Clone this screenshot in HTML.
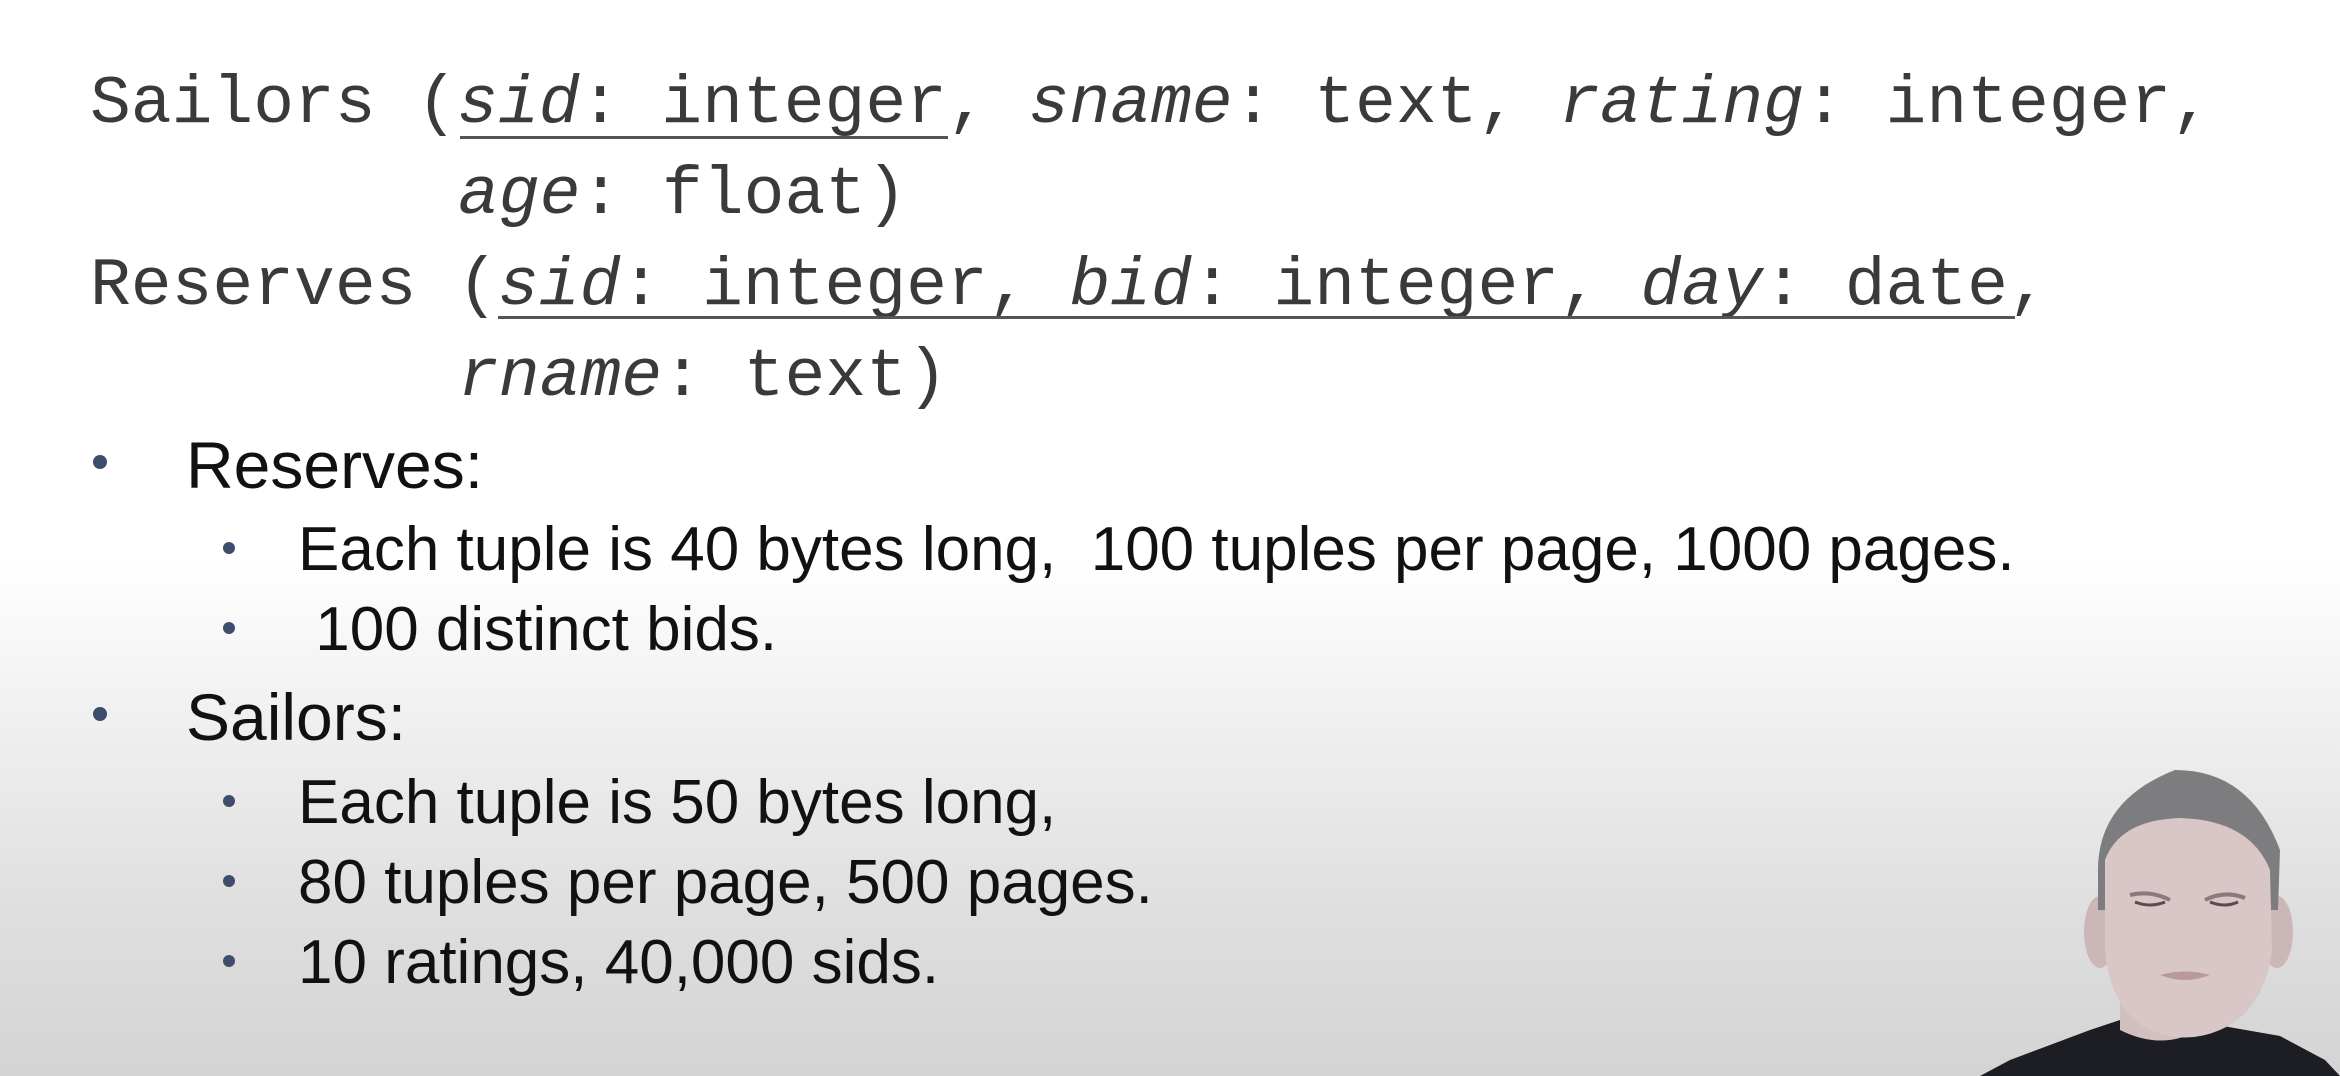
<!DOCTYPE html>
<html><head><style>
html,body{margin:0;padding:0}
body{width:2340px;height:1076px;position:relative;overflow:hidden;
background:linear-gradient(to bottom,#ffffff 0px,#ffffff 560px,#ececec 760px,#dedede 920px,#d4d4d4 1076px);}
.m{position:absolute;font-family:"Liberation Mono",monospace;font-size:68px;color:#3a3a3a;white-space:pre;line-height:1;}
.m i{font-style:italic}
.u{position:absolute;height:3px;background:#555}
.s{position:absolute;font-family:"Liberation Sans",sans-serif;color:#111;white-space:pre;line-height:1}
.b1{font-size:66px}
.b2{font-size:62px}
.d{position:absolute;border-radius:50%;background:#3d4d6b}
</style></head><body>
<div class="m" style="left:90px;top:71px">Sailors (<i>sid</i>: integer, <i>sname</i>: text, <i>rating</i>: integer,</div>
<div class="u" style="left:460px;top:136px;width:488px"></div>
<div class="m" style="left:458px;top:162px"><i>age</i>: float)</div>
<div class="m" style="left:90px;top:253px">Reserves (<i>sid</i>: integer, <i>bid</i>: integer, <i>day</i>: date,</div>
<div class="u" style="left:498px;top:316px;width:1517px"></div>
<div class="m" style="left:458px;top:344px"><i>rname</i>: text)</div>

<div class="d" style="left:93px;top:455px;width:14px;height:14px"></div>
<div class="s b1" style="left:186px;top:432px">Reserves:</div>
<div class="d" style="left:223px;top:542px;width:12px;height:12px"></div>
<div class="s b2" style="left:298px;top:519px">Each tuple is 40 bytes long,  100 tuples per page, 1000 pages.</div>
<div class="d" style="left:223px;top:622px;width:12px;height:12px"></div>
<div class="s b2" style="left:298px;top:599px"> 100 distinct bids.</div>

<div class="d" style="left:93px;top:707px;width:14px;height:14px"></div>
<div class="s b1" style="left:186px;top:684px">Sailors:</div>
<div class="d" style="left:223px;top:795px;width:12px;height:12px"></div>
<div class="s b2" style="left:298px;top:772px">Each tuple is 50 bytes long,</div>
<div class="d" style="left:223px;top:875px;width:12px;height:12px"></div>
<div class="s b2" style="left:298px;top:852px">80 tuples per page, 500 pages.</div>
<div class="d" style="left:223px;top:955px;width:12px;height:12px"></div>
<div class="s b2" style="left:298px;top:932px">10 ratings, 40,000 sids.</div>

<svg style="position:absolute;left:1980px;top:740px" width="360" height="336" viewBox="0 0 360 336">
  <path d="M0 336 L30 320 L110 290 L140 280 L220 282 L300 296 L345 320 L360 336 Z" fill="#1d1d24"/>
  <path d="M140 230 L140 290 Q180 310 215 292 L220 230 Z" fill="#d2bfc0"/>
  <ellipse cx="120" cy="192" rx="16" ry="36" fill="#cbb7b8"/>
  <ellipse cx="297" cy="192" rx="16" ry="36" fill="#cbb7b8"/>
  <path d="M118 130 Q118 60 195 30 Q270 30 300 110 L298 170 L118 170 Z" fill="#7d7c7f"/>
  <path d="M125 120 Q140 80 200 78 Q270 80 290 130 L292 210 Q285 270 240 290 Q205 305 170 290 Q130 270 125 210 Z" fill="#d9c7c7"/>
  <path d="M150 155 Q170 150 190 160 M225 160 Q245 150 265 158" stroke="#8a7a7c" stroke-width="4" fill="none"/>
  <path d="M155 162 Q170 168 185 162 M230 162 Q245 168 258 162" stroke="#5a4a4c" stroke-width="3" fill="none"/>
  <path d="M180 235 Q205 228 230 235 Q205 245 180 235 Z" fill="#b89a9c"/>
</svg>
</body></html>
